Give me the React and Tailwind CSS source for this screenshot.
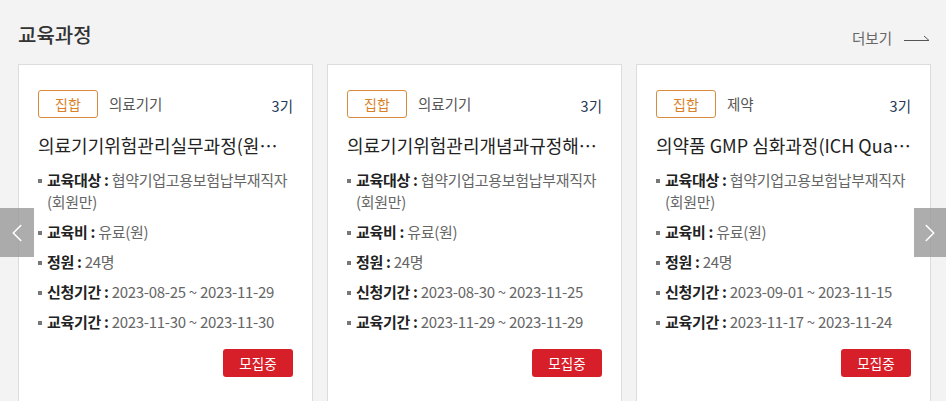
import { ChevronLeft, ChevronRight } from "lucide-react";

const courses = [
  {
    type: "집합",
    category: "의료기기",
    term: "3기",
    title: "의료기기위험관리실무과정(원격교육)",
    target: "협약기업고용보험납부재직자",
    fee: "유료(원)",
    seats: "24명",
    apply: "2023-08-25 ~ 2023-11-29",
    period: "2023-11-30 ~ 2023-11-30",
  },
  {
    type: "집합",
    category: "의료기기",
    term: "3기",
    title: "의료기기위험관리개념과규정해설과정",
    target: "협약기업고용보험납부재직자",
    fee: "유료(원)",
    seats: "24명",
    apply: "2023-08-30 ~ 2023-11-25",
    period: "2023-11-29 ~ 2023-11-29",
  },
  {
    type: "집합",
    category: "제약",
    term: "3기",
    title: "의약품 GMP 심화과정(ICH Quality Guideline)",
    target: "협약기업고용보험납부재직자",
    fee: "유료(원)",
    seats: "24명",
    apply: "2023-09-01 ~ 2023-11-15",
    period: "2023-11-17 ~ 2023-11-24",
  },
];

function Item({ label, children }) {
  return (
    <li className="flex">
      <span className="mt-[10px] mr-[5px] h-[4px] w-[4px] shrink-0 bg-[#777]" />
      <p className="text-[15px] leading-[22px] tracking-[-0.3px] text-[#666]">
        <strong className="font-bold text-[#222]">{label} :</strong> {children}
      </p>
    </li>
  );
}

function CourseCard({ course }) {
  return (
    <div className="h-[345px] w-[295px] shrink-0 border border-[#dcdcdc] bg-white px-[19px] pt-[25px]">
      <div className="flex items-center">
        <span className="flex h-[28px] w-[60px] items-center justify-center rounded-[3px] border border-[#d98a3c] text-[14px] text-[#d9822b]">
          {course.type}
        </span>
        <span className="ml-[11px] text-[14.5px] text-[#555]">{course.category}</span>
        <span className="ml-auto mt-[3px] text-[14.5px] text-[#253858]">{course.term}</span>
      </div>
      <h3 className="mt-[14px] truncate text-[18px] leading-[26px] text-[#222]">
        {course.title}
      </h3>
      <ul className="mt-[11px] flex flex-col gap-[8px]">
        <Item label="교육대상">
          {course.target}
          <br />
          (회원만)
        </Item>
        <Item label="교육비">{course.fee}</Item>
        <Item label="정원">{course.seats}</Item>
        <Item label="신청기간">{course.apply}</Item>
        <Item label="교육기간">{course.period}</Item>
      </ul>
      <div className="mt-[16px] flex justify-end">
        <button className="h-[28px] w-[70px] rounded-[3px] bg-[#d71f2a] text-[13.5px] text-white">
          모집중
        </button>
      </div>
    </div>
  );
}

export default function App() {
  return (
    <div
      className="h-[401px] w-[946px] overflow-hidden bg-[#f3f3f3]"
      style={{ fontFamily: '"Noto Sans CJK KR", "Noto Sans", sans-serif' }}
    >
      <div className="relative px-[18px]">
        <div className="flex h-[64px] items-center justify-between pt-[6px]">
          <h2 className="text-[20px] font-medium text-[#333]">교육과정</h2>
          <a className="mt-[6px] mr-[-2px] flex items-center gap-[12px] text-[14.5px] text-[#666]">
            더보기
            <svg width="26" height="8" viewBox="0 0 26 8" fill="none" stroke="#555" strokeWidth="1">
              <path d="M0 6.5H25L20 2" />
            </svg>
          </a>
        </div>
        <div className="flex gap-[14px]">
          {courses.map((c, i) => (
            <CourseCard key={i} course={c} />
          ))}
        </div>
        <button className="absolute left-0 top-[208px] flex h-[49px] w-[34px] items-center justify-center bg-[#999]/80 text-white">
          <ChevronLeft size={30} strokeWidth={1.3} />
        </button>
        <button className="absolute right-0 top-[208px] flex h-[49px] w-[32px] items-center justify-center bg-[#999]/80 text-white">
          <ChevronRight size={30} strokeWidth={1.3} />
        </button>
      </div>
    </div>
  );
}
